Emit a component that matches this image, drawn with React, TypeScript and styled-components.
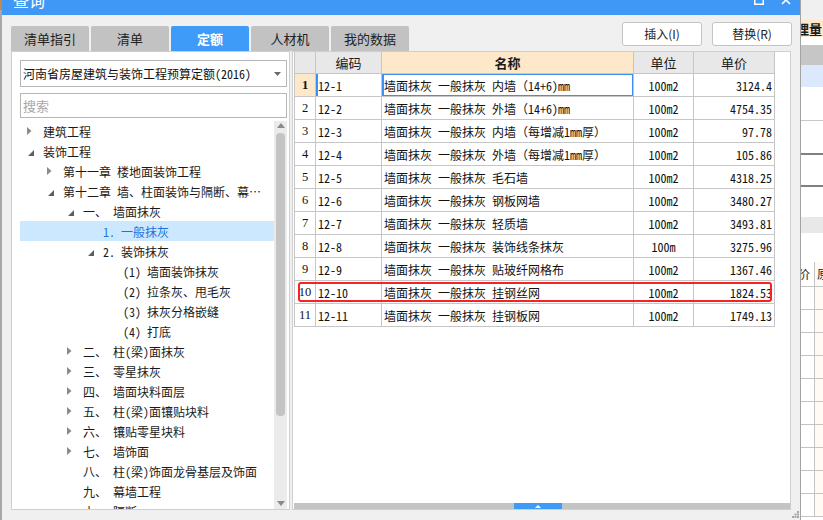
import React from 'react';
import styled, { createGlobalStyle, css } from 'styled-components';

const FONT = `"Noto Sans Mono CJK SC", "Noto Sans CJK SC", sans-serif`;
const UI_FONT = `"Noto Sans CJK SC", sans-serif`;

const Global = createGlobalStyle`
  html, body { margin: 0; padding: 0; }
  body { width: 823px; height: 520px; overflow: hidden; background: #f0f0f0; font-family: ${UI_FONT}; }
  * { box-sizing: border-box; }
`;

const Screen = styled.div`
  display: flex;
  width: 823px;
  height: 520px;
  overflow: hidden;
`;

const LeftEdge = styled.div`
  width: 2px;
  flex: none;
  background: linear-gradient(#c4884c 0 10px, #a8a8a8 10px);
`;

const Dialog = styled.div`
  position: relative;
  width: 799px;
  flex: none;
  display: flex;
  flex-direction: column;
  background: #f0f0f0;
  border-right: 1px solid #a3a3a3;
`;

const TitleBar = styled.div`
  height: 15px;
  flex: none;
  display: flex;
  align-items: flex-start;
  padding: 0 9px 0 11px;
  background: #4098f6;
  overflow: hidden;
`;

const TitleText = styled.div`
  margin-top: -8px;
  font-size: 16px;
  line-height: 16px;
  color: #fff;
`;

const TitleIcons = styled.div`
  margin-left: auto;
  display: flex;
  gap: 17px;
  svg { margin-top: -5px; display: block; }
`;

const Body = styled.div`
  flex: 1;
  display: flex;
  flex-direction: column;
  min-height: 0;
  padding: 0 9px 10px 9px;
`;

const Header = styled.div`
  height: 36px;
  flex: none;
  display: flex;
  justify-content: space-between;
`;

const Tabs = styled.div`
  display: flex;
  gap: 2px;
  align-self: flex-end;
`;

const Tab = styled.div<{ $active?: boolean }>`
  width: 78px;
  height: 25px;
  border-radius: 2px 2px 0 0;
  background: ${p => (p.$active ? '#3f9bf8' : '#c2c2c2')};
  color: ${p => (p.$active ? '#fff' : '#222')};
  font-weight: ${p => (p.$active ? 700 : 400)};
  font-size: 13px;
  line-height: 25px;
  text-align: center;
`;

const Buttons = styled.div`
  display: flex;
  gap: 10px;
  margin-top: 7px;
  margin-right: -1px;
`;

const Button = styled.div`
  width: 80px;
  height: 24px;
  background: #fff;
  border: 1px solid #c4c4c4;
  border-radius: 3px;
  font-size: 12px;
  line-height: 22px;
  text-align: center;
  color: #222;
`;

const Content = styled.div`
  flex: 1;
  min-height: 0;
  display: flex;
  gap: 2px;
`;

const LeftPanel = styled.div`
  width: 279px;
  flex: none;
  display: flex;
  flex-direction: column;
  background: #fff;
  border: 1px solid #cfcfcf;
  padding: 8px 2px 0 8px;
`;

const Select = styled.div`
  height: 27px;
  flex: none;
  display: flex;
  align-items: center;
  padding: 0 5px 0 2px;
  border: 1px solid #b6b6b6;
  font-family: ${FONT};
  font-size: 12px;
  color: #111;
  svg { margin-left: auto; }
`;

const Search = styled.div`
  height: 25px;
  flex: none;
  margin-top: 6px;
  display: flex;
  align-items: center;
  padding-left: 2px;
  border: 1px solid #b6b6b6;
  font-size: 13px;
  color: #a8a8a8;
`;

const Tree = styled.div`
  flex: 1;
  min-height: 0;
  margin-top: 3px;
  display: flex;
  overflow: hidden;
`;

const TreeList = styled.div`
  flex: 1;
  min-width: 0;
  display: flex;
  flex-direction: column;
`;

const TreeRow = styled.div<{ $level: number; $selected?: boolean }>`
  height: 20px;
  flex: none;
  display: flex;
  align-items: center;
  padding-left: ${p => 7 + p.$level * 20}px;
  background: ${p => (p.$selected ? '#cce8ff' : 'transparent')};
  color: ${p => (p.$selected ? '#1f72e0' : '#1a1a1a')};
  font-family: ${FONT};
  font-size: 12px;
  white-space: nowrap;
`;

const ArrowBox = styled.div`
  width: 16px;
  flex: none;
  display: flex;
  align-items: center;
`;

const Label = styled.div`
  flex: 1;
  min-width: 0;
  overflow: hidden;
  text-overflow: ellipsis;
  padding-right: 6px;
`;

const VScroll = styled.div`
  width: 13px;
  flex: none;
  display: flex;
  flex-direction: column;
  align-items: center;
  background: #ebebeb;
  padding: 2px 0 3px;
`;

const VThumb = styled.div`
  width: 9px;
  height: 283px;
  margin-top: 5px;
  border-radius: 4px;
  background: #c4c4c4;
`;

const Spacer = styled.div`
  flex: 1;
`;

const RightPanel = styled.div`
  flex: 1;
  min-width: 0;
  display: flex;
  flex-direction: column;
  background: #fff;
  border: 1px solid #cfcfcf;
  padding-left: 1px;
`;

const Table = styled.div`
  width: 481px;
  border-left: 1px solid #c6c6c6;
  display: flex;
  flex-direction: column;
`;

const COLS = '21px 66px 252px 60px 81px';

const HeadRow = styled.div`
  display: grid;
  grid-template-columns: ${COLS};
  height: 22px;
`;

const HeadCell = styled.div<{ $hl?: boolean }>`
  border-right: 1px solid #c6c6c6;
  border-bottom: 1px solid #c6c6c6;
  background: ${p => (p.$hl ? '#fde8c9' : '#e8e8e8')};
  font-weight: ${p => (p.$hl ? 700 : 400)};
  font-size: 13px;
  color: #1a1a1a;
  display: flex;
  align-items: center;
  justify-content: center;
`;

const Row = styled.div<{ $marked?: boolean }>`
  position: relative;
  display: grid;
  grid-template-columns: ${COLS};
  height: 23px;
  ${p =>
    p.$marked &&
    css`
      &::after {
        content: '';
        position: absolute;
        left: 3px;
        top: 1px;
        right: 3px;
        bottom: 2px;
        border: 2px solid #f42424;
        border-radius: 3px;
        pointer-events: none;
      }
    `}
`;

type Kind = 'num' | 'code' | 'name' | 'unit' | 'price';

const Cell = styled.div<{ $kind: Kind; $current?: boolean }>`
  border-right: 1px solid #c6c6c6;
  border-bottom: 1px solid #c6c6c6;
  display: flex;
  align-items: center;
  overflow: hidden;
  white-space: nowrap;
  font-family: ${FONT};
  font-size: 12px;
  color: #111;
  ${p => {
    switch (p.$kind) {
      case 'num':
        return css`
          justify-content: center;
          font-family: "Liberation Serif", serif;
          font-size: 12.5px;
          background: ${p.$current ? '#fde8c9' : '#fff'};
          font-weight: ${p.$current ? 700 : 400};
        `;
      case 'code':
        return css`
          padding-left: 2px;
          ${p.$current && css`box-shadow: inset 2px 0 0 #3c8ff3;`}
        `;
      case 'name':
        return css`
          padding-left: 2px;
          ${p.$current && css`box-shadow: inset 2px 0 0 #3c8ff3, inset 0 0 0 1px #3c8ff3;`}
        `;
      case 'unit':
        return css`
          justify-content: center;
        `;
      case 'price':
        return css`
          justify-content: flex-end;
          padding-right: 2px;
        `;
    }
  }}
`;

const HScroll = styled.div`
  margin-top: auto;
  height: 6px;
  flex: none;
  display: flex;
  background: #c4c4c4;
`;

const HThumb = styled.div`
  margin-left: 220px;
  width: 48px;
  height: 6px;
  background: #3f9bf8;
  display: flex;
  align-items: center;
  justify-content: center;
`;

const Grip = styled.svg`
  position: absolute;
  right: 1px;
  bottom: 2px;
`;

/* background application strip */
const BgApp = styled.div`
  width: 22px;
  flex: none;
  display: flex;
  flex-direction: column;
  background: #fff;
  overflow: hidden;
`;

const BgBlock = styled.div<{ $h: number; $bg?: string; $line?: string }>`
  height: ${p => p.$h}px;
  flex: none;
  background: ${p => p.$bg || '#fff'};
  ${p => p.$line && css`border-bottom: ${p.$line};`}
`;

const BgTitle = styled.div`
  height: 17px;
  flex: none;
  background: #fde8c9;
  font-weight: 700;
  font-size: 13px;
  line-height: 17px;
  color: #1a1a1a;
  white-space: nowrap;
  margin-left: -5px;
  padding-left: 0;
`;

const BgGridRow = styled.div<{ $h: number }>`
  height: ${p => p.$h}px;
  flex: none;
  display: grid;
  grid-template-columns: 14px 1fr;
  border-bottom: 1px solid #c4c4c4;
`;

const BgCell = styled.div<{ $alt?: boolean }>`
  background: ${p => (p.$alt ? '#fffaf3' : '#fff')};
  ${p => !p.$alt && css`border-right: 1px solid #c4c4c4;`}
  font-size: 12px;
  line-height: 24px;
  color: #222;
  white-space: nowrap;
  overflow: hidden;
`;

const BgCut = styled.span<{ $shift: number }>`
  display: inline-block;
  margin-left: ${p => p.$shift}px;
`;

type Arrow = 'open' | 'closed' | 'none';

const tree: { level: number; arrow: Arrow; text: string; selected?: boolean }[] = [
  { level: 0, arrow: 'closed', text: '建筑工程' },
  { level: 0, arrow: 'open', text: '装饰工程' },
  { level: 1, arrow: 'closed', text: '第十一章 楼地面装饰工程' },
  { level: 1, arrow: 'open', text: '第十二章 墙、柱面装饰与隔断、幕墙工程' },
  { level: 2, arrow: 'open', text: '一、 墙面抹灰' },
  { level: 3, arrow: 'none', text: '1. 一般抹灰', selected: true },
  { level: 3, arrow: 'open', text: '2. 装饰抹灰' },
  { level: 4, arrow: 'none', text: '(1) 墙面装饰抹灰' },
  { level: 4, arrow: 'none', text: '(2) 拉条灰、甩毛灰' },
  { level: 4, arrow: 'none', text: '(3) 抹灰分格嵌缝' },
  { level: 4, arrow: 'none', text: '(4) 打底' },
  { level: 2, arrow: 'closed', text: '二、 柱(梁)面抹灰' },
  { level: 2, arrow: 'closed', text: '三、 零星抹灰' },
  { level: 2, arrow: 'closed', text: '四、 墙面块料面层' },
  { level: 2, arrow: 'closed', text: '五、 柱(梁)面镶贴块料' },
  { level: 2, arrow: 'closed', text: '六、 镶贴零星块料' },
  { level: 2, arrow: 'closed', text: '七、 墙饰面' },
  { level: 2, arrow: 'none', text: '八、 柱(梁)饰面龙骨基层及饰面' },
  { level: 2, arrow: 'none', text: '九、 幕墙工程' },
  { level: 2, arrow: 'none', text: '十、 隔断' },
];

const rows: [string, string, string, string][] = [
  ['12-1', '墙面抹灰 一般抹灰 内墙（14+6)mm', '100m2', '3124.4'],
  ['12-2', '墙面抹灰 一般抹灰 外墙（14+6)mm', '100m2', '4754.35'],
  ['12-3', '墙面抹灰 一般抹灰 内墙（每增减1mm厚）', '100m2', '97.78'],
  ['12-4', '墙面抹灰 一般抹灰 外墙（每增减1mm厚）', '100m2', '105.86'],
  ['12-5', '墙面抹灰 一般抹灰 毛石墙', '100m2', '4318.25'],
  ['12-6', '墙面抹灰 一般抹灰 钢板网墙', '100m2', '3480.27'],
  ['12-7', '墙面抹灰 一般抹灰 轻质墙', '100m2', '3493.81'],
  ['12-8', '墙面抹灰 一般抹灰 装饰线条抹灰', '100m', '3275.96'],
  ['12-9', '墙面抹灰 一般抹灰 贴玻纤网格布', '100m2', '1367.46'],
  ['12-10', '墙面抹灰 一般抹灰 挂钢丝网', '100m2', '1824.53'],
  ['12-11', '墙面抹灰 一般抹灰 挂钢板网', '100m2', '1749.13'],
];

const TreeArrow = ({ kind }: { kind: Arrow }) => {
  if (kind === 'closed')
    return (
      <svg width="5" height="8" viewBox="0 0 5 8">
        <polygon points="0,0 4.5,4 0,8" fill="#8a8a8a" />
      </svg>
    );
  if (kind === 'open')
    return (
      <svg width="6" height="6" viewBox="0 0 6 6" style={{ marginLeft: 1, marginTop: 3 }}>
        <polygon points="6,0 6,6 0,6" fill="#5e5e5e" />
      </svg>
    );
  return null;
};

export default function App() {
  return (
    <>
      <Global />
      <Screen>
        <LeftEdge />
        <Dialog>
          <TitleBar>
            <TitleText>查询</TitleText>
            <TitleIcons>
              <svg width="10" height="10" viewBox="0 0 10 10">
                <rect x="0.75" y="0.75" width="8.5" height="8.5" fill="none" stroke="#fff" strokeWidth="1.5" />
              </svg>
              <svg width="10" height="10" viewBox="0 0 10 10">
                <path d="M1 1 L9 9 M9 1 L1 9" stroke="#fff" strokeWidth="1.6" />
              </svg>
            </TitleIcons>
          </TitleBar>
          <Body>
            <Header>
              <Tabs>
                <Tab>清单指引</Tab>
                <Tab>清单</Tab>
                <Tab $active>定额</Tab>
                <Tab>人材机</Tab>
                <Tab>我的数据</Tab>
              </Tabs>
              <Buttons>
                <Button>插入(I)</Button>
                <Button>替换(R)</Button>
              </Buttons>
            </Header>
            <Content>
              <LeftPanel>
                <Select>
                  河南省房屋建筑与装饰工程预算定额(2016)
                  <svg width="7" height="4" viewBox="0 0 7 4">
                    <polygon points="0,0 7,0 3.5,4" fill="#6a6a6a" />
                  </svg>
                </Select>
                <Search>搜索</Search>
                <Tree>
                  <TreeList>
                    {tree.map((n, i) => (
                      <TreeRow key={i} $level={n.level} $selected={n.selected}>
                        <ArrowBox>
                          <TreeArrow kind={n.arrow} />
                        </ArrowBox>
                        <Label>{n.text}</Label>
                      </TreeRow>
                    ))}
                  </TreeList>
                  <VScroll>
                    <svg width="8" height="5" viewBox="0 0 8 5">
                      <polygon points="0,5 8,5 4,0" fill="#8a8a8a" />
                    </svg>
                    <VThumb />
                    <Spacer />
                    <svg width="8" height="5" viewBox="0 0 8 5">
                      <polygon points="0,0 8,0 4,5" fill="#8a8a8a" />
                    </svg>
                  </VScroll>
                </Tree>
              </LeftPanel>
              <RightPanel>
                <Table>
                  <HeadRow>
                    <HeadCell />
                    <HeadCell>编码</HeadCell>
                    <HeadCell $hl>名称</HeadCell>
                    <HeadCell>单位</HeadCell>
                    <HeadCell>单价</HeadCell>
                  </HeadRow>
                  {rows.map((r, i) => (
                    <Row key={r[0]} $marked={i === 9}>
                      <Cell $kind="num" $current={i === 0}>{i + 1}</Cell>
                      <Cell $kind="code" $current={i === 0}>{r[0]}</Cell>
                      <Cell $kind="name" $current={i === 0}>{r[1]}</Cell>
                      <Cell $kind="unit">{r[2]}</Cell>
                      <Cell $kind="price">{r[3]}</Cell>
                    </Row>
                  ))}
                </Table>
                <HScroll>
                  <HThumb>
                    <svg width="6" height="3" viewBox="0 0 6 3">
                      <polygon points="0,3 6,3 3,0" fill="#fff" />
                    </svg>
                  </HThumb>
                </HScroll>
              </RightPanel>
            </Content>
          </Body>
          <Grip width="7" height="7" viewBox="0 0 7 7">
            <rect x="5" y="0" width="2" height="2" fill="#a8a8a8" />
            <rect x="2.5" y="2.5" width="2" height="2" fill="#a8a8a8" />
            <rect x="5" y="2.5" width="2" height="2" fill="#a8a8a8" />
            <rect x="0" y="5" width="2" height="2" fill="#a8a8a8" />
            <rect x="2.5" y="5" width="2" height="2" fill="#a8a8a8" />
            <rect x="5" y="5" width="2" height="2" fill="#a8a8a8" />
          </Grip>
        </Dialog>
        <BgApp>
          <BgBlock $h={20} $bg="#f0f0f0" />
          <BgTitle>理量</BgTitle>
          <BgBlock $h={8} />
          <BgBlock $h={20} $bg="#c6c6c6" />
          <BgBlock $h={22} $bg="#dce8fb" />
          <BgBlock $h={34} $line="1px solid #c8c8c8" />
          <BgBlock $h={34} $line="2px solid #808080" />
          <BgBlock $h={32} $line="2px solid #808080" />
          <BgBlock $h={30} />
          <BgBlock $h={16} $bg="#e8e8e8" />
          <BgBlock $h={29} />
          <BgGridRow $h={25}>
            <BgCell><BgCut $shift={-3}>价</BgCut></BgCell>
            <BgCell $alt><BgCut $shift={2}>原</BgCut></BgCell>
          </BgGridRow>
          {Array.from({ length: 10 }).map((_, i) => (
            <BgGridRow key={i} $h={23}>
              <BgCell />
              <BgCell $alt />
            </BgGridRow>
          ))}
        </BgApp>
      </Screen>
    </>
  );
}
